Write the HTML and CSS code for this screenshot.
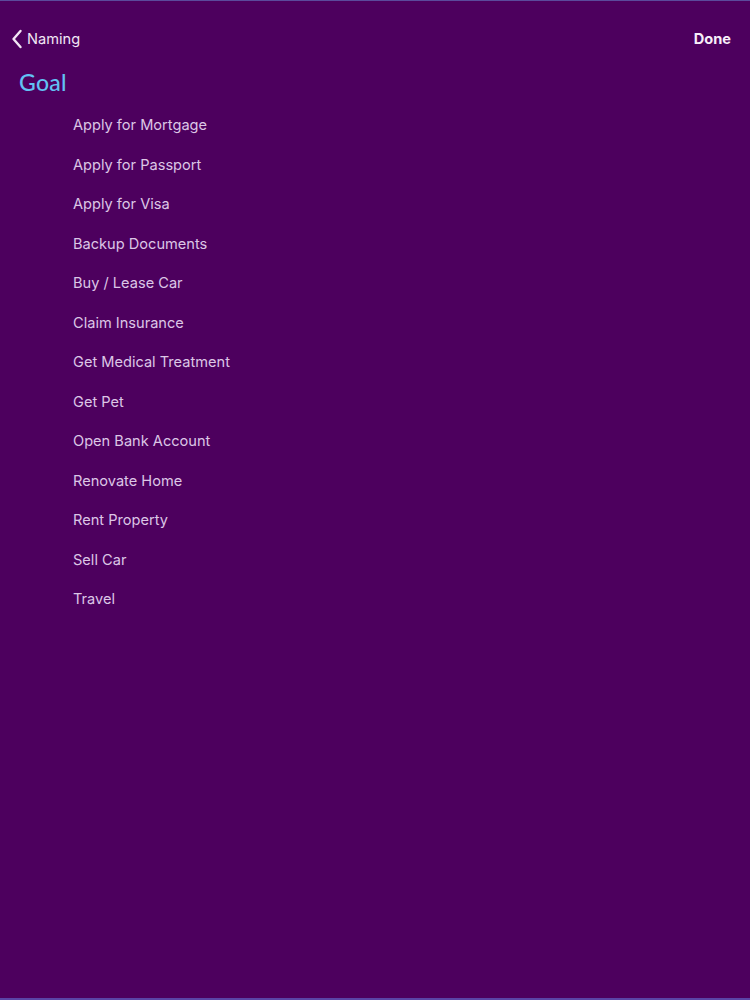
FILE: index.html
```html
<!DOCTYPE html>
<html>
<head>
<meta charset="utf-8">
<link rel="stylesheet" href="styles.css">
</head>
<body>
<div class="screen">
  <header class="nav">
    <a class="back">
      <svg class="chev" width="12" height="20" viewBox="0 0 12 20"><path d="M9.5 2 L2.5 10 L9.5 18" fill="none" stroke="#f2e6f5" stroke-width="2.4" stroke-linecap="round" stroke-linejoin="round"/></svg>
      <span>Naming</span>
    </a>
    <span class="done">Done</span>
  </header>
  <h1 class="title">Goal</h1>
  <ul class="list">
    <li>Apply for Mortgage</li>
    <li>Apply for Passport</li>
    <li>Apply for Visa</li>
    <li>Backup Documents</li>
    <li>Buy / Lease Car</li>
    <li>Claim Insurance</li>
    <li>Get Medical Treatment</li>
    <li>Get Pet</li>
    <li>Open Bank Account</li>
    <li>Renovate Home</li>
    <li>Rent Property</li>
    <li>Sell Car</li>
    <li>Travel</li>
  </ul>
</div>
</body>
</html>
```

FILE: styles.css
```css
html, body {
  margin: 0;
  padding: 0;
  background: #4d005e;
}
.screen {
  box-sizing: border-box;
  width: 750px;
  height: 1000px;
  background: #4d005e;
  border-top: 1px solid #5b4a9c;
  border-bottom: 2px solid #5a44a6;
  font-family: "Inter", "Liberation Sans", sans-serif;
  overflow: hidden;
}
.nav {
  display: flex;
  justify-content: space-between;
  align-items: center;
  height: 28px;
  margin-top: 24px;
  padding: 0 19px 0 11px;
}
.back {
  display: flex;
  align-items: center;
  gap: 4px;
  color: #f2e6f5;
  font-size: 14.6px;
}
.chev {
  display: block;
}
.done {
  color: #f7eef9;
  font-size: 14.6px;
  font-weight: 700;
}
.title {
  margin: 11px 0 0 19px;
  font-family: "Lato", "Open Sans", sans-serif;
  font-weight: 500;
  font-size: 23px;
  line-height: 36px;
  color: #62c2f4;
  letter-spacing: 0.3px;
}
.list {
  list-style: none;
  margin: 6px 0 0 0;
  padding: 0 0 0 73px;
}
.list li {
  height: 39.5px;
  line-height: 39.5px;
  font-size: 14.6px;
  color: #dcc6e6;
}
```
